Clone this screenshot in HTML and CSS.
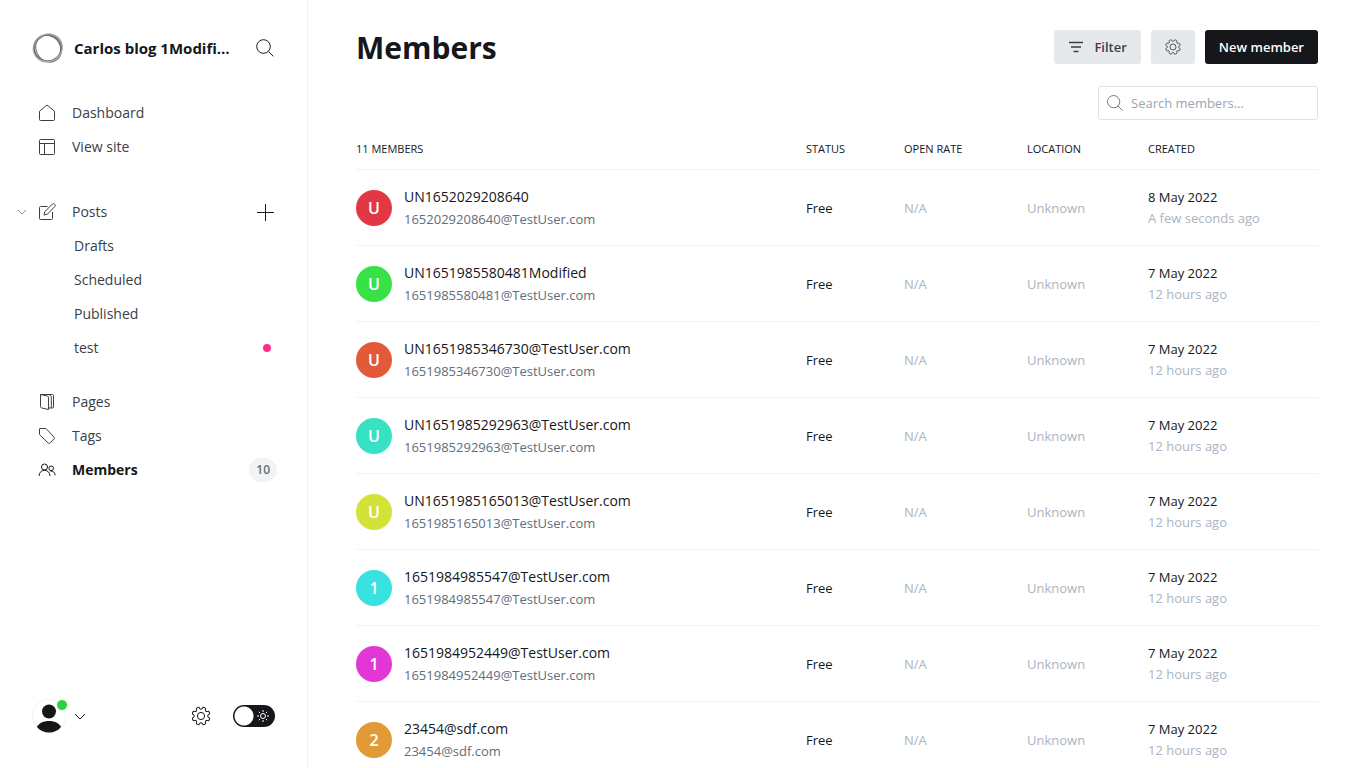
FILE: index.html
```html
<!DOCTYPE html>
<html lang="en">
<head>
<meta charset="utf-8">
<title>Members</title>
<link rel="stylesheet" href="styles.css">
</head>
<body>
<svg class="sprite" aria-hidden="true">
  <symbol id="gear" viewBox="0 0 24 24">
    <path d="M10.343 3.94c.09-.542.56-.94 1.11-.94h1.093c.55 0 1.02.398 1.11.94l.149.894c.07.424.384.764.78.93.398.164.855.142 1.205-.108l.737-.527a1.125 1.125 0 011.45.12l.773.774c.39.389.44 1.002.12 1.45l-.527.737c-.25.35-.272.806-.107 1.204.165.397.505.71.93.78l.893.15c.543.09.94.56.94 1.109v1.094c0 .55-.397 1.02-.94 1.11l-.893.149c-.425.07-.765.383-.93.78-.165.398-.143.854.107 1.204l.527.738c.32.447.269 1.06-.12 1.45l-.774.773a1.125 1.125 0 01-1.449.12l-.738-.527c-.35-.25-.806-.272-1.203-.107-.397.165-.71.505-.781.929l-.149.894c-.09.542-.56.94-1.11.94h-1.094c-.55 0-1.019-.398-1.11-.94l-.148-.894c-.071-.424-.384-.764-.781-.93-.398-.164-.854-.142-1.204.108l-.738.527c-.447.32-1.06.269-1.45-.12l-.773-.774a1.125 1.125 0 01-.12-1.45l.527-.737c.25-.35.273-.806.108-1.204-.165-.397-.505-.71-.93-.78l-.894-.15c-.542-.09-.94-.56-.94-1.109v-1.094c0-.55.398-1.02.94-1.11l.894-.149c.424-.07.765-.383.93-.78.165-.398.143-.854-.107-1.204l-.527-.738a1.125 1.125 0 01.12-1.45l.773-.773a1.125 1.125 0 011.45-.12l.737.527c.35.25.807.272 1.204.107.397-.165.71-.505.78-.929l.15-.894z" transform="rotate(22.5 12 12)"/>
    <circle cx="12" cy="12" r="3.6"/>
  </symbol>
  <symbol id="search" viewBox="0 0 20 20">
    <circle cx="8.5" cy="8.5" r="6.8"/><path d="M13.4 13.4l5 5"/>
  </symbol>
</svg>
<div class="app">
  <nav class="sidebar" aria-label="Main">
    <header class="site">
      <svg class="site-logo" viewBox="0 0 32 32" aria-hidden="true">
        <ellipse cx="16" cy="16" rx="14" ry="13.2" stroke="#8a8a8a" stroke-width="2" transform="rotate(-40 16 16)"/>
        <ellipse cx="15.4" cy="16.6" rx="13.8" ry="12.6" stroke="#5c5c5c" transform="rotate(30 16 16)"/>
        <ellipse cx="16.6" cy="15.6" rx="14.2" ry="12.4" stroke="#777" transform="rotate(60 16 16)"/>
        <ellipse cx="15.8" cy="15.8" rx="14.8" ry="13.6" stroke="#b5b5b5" transform="rotate(-20 16 16)"/>
      </svg>
      <span class="site-name">Carlos blog 1Modified</span>
      <button class="icon-button" type="button" aria-label="Search"><svg class="icon icon-lg" aria-hidden="true"><use href="#search"/></svg></button>
    </header>

    <ul class="nav-group">
      <li><a class="nav-link" href="#dashboard"><svg class="icon" viewBox="0 0 18 18" aria-hidden="true"><path d="M1.500 7.200L9 1l7.500 6.200V15.500a1 1 0 0 1-1 1h-13a1 1 0 0 1-1-1z"/></svg>Dashboard</a></li>
      <li><a class="nav-link" href="#site"><svg class="icon" viewBox="0 0 18 18" aria-hidden="true"><rect x="1.500" y="1.500" width="15" height="15" rx="1"/><path d="M1.500 5.500h15M6.500 5.500v11"/></svg>View site</a></li>
    </ul>

    <ul class="nav-group posts">
      <li class="nav-row">
        <button class="expander" type="button" aria-label="Collapse posts"><svg viewBox="0 0 10 6" aria-hidden="true"><path d="M1 1l4 4 4-4"/></svg></button>
        <a class="nav-link" href="#posts"><svg class="icon" viewBox="0 0 18 18" aria-hidden="true"><path d="M9.500 3.500h-7a1 1 0 0 0-1 1v11a1 1 0 0 0 1 1h11a1 1 0 0 0 1-1V9"/><path d="M6 12l.8-3.400L14.200 1.300a1.600 1.600 0 0 1 2.500 2.400L9.400 11.200z"/></svg>Posts</a>
        <button class="icon-button" type="button" aria-label="New post"><svg class="icon icon-lg" viewBox="0 0 20 20" aria-hidden="true"><path d="M10.500 2v17M2 10.500h17"/></svg></button>
      </li>
      <li><a class="nav-link sub" href="#drafts">Drafts</a></li>
      <li><a class="nav-link sub" href="#scheduled">Scheduled</a></li>
      <li><a class="nav-link sub" href="#published">Published</a></li>
      <li><a class="nav-link sub" href="#test">test<span class="dot"></span></a></li>
    </ul>

    <ul class="nav-group">
      <li><a class="nav-link" href="#pages"><svg class="icon" viewBox="0 0 18 18" aria-hidden="true"><path d="M2.500 1.500l7 1.600a1.300 1.300 0 0 1 1 1.200v12.200l-7-1.600a1.300 1.300 0 0 1-1-1.200z"/><path d="M2.500 1.500h12a1 1 0 0 1 1 1v11.500a1 1 0 0 1-1 1h-4"/><path d="M10.500 1.500l2 .9a1.500 1.500 0 0 1 .8 1.300V15"/></svg>Pages</a></li>
      <li><a class="nav-link" href="#tags"><svg class="icon" viewBox="0 0 18 18" aria-hidden="true"><path d="M1.500 2v5.500l8.800 8.700a1 1 0 0 0 1.400 0l4.500-4.500a1 1 0 0 0 0-1.400L8 1.500H2a.5.5 0 0 0-.5.500z"/></svg>Tags</a></li>
      <li><a class="nav-link active" href="#members" aria-current="page"><svg class="icon" viewBox="0 0 18 18" aria-hidden="true"><circle cx="6.500" cy="6" r="3"/><path d="M1 15c.3-3.800 2.500-5.700 5.500-5.700S11.700 11.200 12 15"/><circle cx="13.200" cy="7.300" r="2.300"/><path d="M12.500 10.200c2.800-.5 4.400 1.400 4.600 4.100"/></svg>Members<span class="count">10</span></a></li>
    </ul>

    <footer class="account">
      <button class="user" type="button" aria-label="Account menu">
        <span class="user-pic">
          <svg viewBox="0 0 34 34" aria-hidden="true"><circle cx="17" cy="17" r="16.500" fill="#fff" stroke="#f1f3f4"/><circle cx="17" cy="12.500" r="7" fill="#15171a"/><path d="M5 28c2-4 6.500-6 12-6s10 2 12 6c-3 3.600-7 5.500-12 5.500S8 31.600 5 28z" fill="#15171a"/></svg>
          <span class="presence"></span>
        </span>
        <svg class="chevron" viewBox="0 0 12 7" aria-hidden="true"><path d="M1 1l5 5 5-5"/></svg>
      </button>
      <a class="settings" href="#settings" aria-label="Settings"><svg class="icon gear-lg" aria-hidden="true"><use href="#gear"/></svg></a>
      <label class="switch">
        <input type="checkbox" aria-label="Night shift">
        <svg viewBox="0 0 14 14" aria-hidden="true"><circle cx="7" cy="7" r="2.500"/><path d="M7 1v2M7 11v2M1 7h2M11 7h2M2.800 2.800l1.300 1.300M9.900 9.900l1.300 1.300M2.800 11.200l1.300-1.300M9.900 4.100l1.300-1.300"/></svg>
      </label>
    </footer>
  </nav>

  <main class="content">
    <header class="toolbar">
      <h1>Members</h1>
      <button class="btn" type="button"><svg class="filter-icon" viewBox="0 0 16 12" aria-hidden="true"><path d="M1 1.500h14M3 6h10M5.500 10.500h5"/></svg>Filter</button>
      <button class="btn btn-icon" type="button" aria-label="Member actions"><svg class="icon gear-sm" aria-hidden="true"><use href="#gear"/></svg></button>
      <a class="btn btn-primary" href="#new">New member</a>
    </header>
    <label class="search">
      <svg class="icon" aria-hidden="true"><use href="#search"/></svg>
      <input type="text" placeholder="Search members..." aria-label="Search members">
    </label>
    <table class="members">
      <thead>
        <tr><th>11 members</th><th class="col-status">Status</th><th class="col-rate">Open rate</th><th class="col-location">Location</th><th class="col-created">Created</th></tr>
      </thead>
      <tbody>
        <tr><td><div class="person"><span class="avatar red">U</span><div><h2>UN1652029208640</h2><p>1652029208640@TestUser.com</p></div></div></td><td>Free</td><td class="muted">N/A</td><td class="muted">Unknown</td><td>8 May 2022<div class="muted">A few seconds ago</div></td></tr>
        <tr><td><div class="person"><span class="avatar green">U</span><div><h2>UN1651985580481Modified</h2><p>1651985580481@TestUser.com</p></div></div></td><td>Free</td><td class="muted">N/A</td><td class="muted">Unknown</td><td>7 May 2022<div class="muted">12 hours ago</div></td></tr>
        <tr><td><div class="person"><span class="avatar orange">U</span><div><h2>UN1651985346730@TestUser.com</h2><p>1651985346730@TestUser.com</p></div></div></td><td>Free</td><td class="muted">N/A</td><td class="muted">Unknown</td><td>7 May 2022<div class="muted">12 hours ago</div></td></tr>
        <tr><td><div class="person"><span class="avatar teal">U</span><div><h2>UN1651985292963@TestUser.com</h2><p>1651985292963@TestUser.com</p></div></div></td><td>Free</td><td class="muted">N/A</td><td class="muted">Unknown</td><td>7 May 2022<div class="muted">12 hours ago</div></td></tr>
        <tr><td><div class="person"><span class="avatar lime">U</span><div><h2>UN1651985165013@TestUser.com</h2><p>1651985165013@TestUser.com</p></div></div></td><td>Free</td><td class="muted">N/A</td><td class="muted">Unknown</td><td>7 May 2022<div class="muted">12 hours ago</div></td></tr>
        <tr><td><div class="person"><span class="avatar cyan">1</span><div><h2>1651984985547@TestUser.com</h2><p>1651984985547@TestUser.com</p></div></div></td><td>Free</td><td class="muted">N/A</td><td class="muted">Unknown</td><td>7 May 2022<div class="muted">12 hours ago</div></td></tr>
        <tr><td><div class="person"><span class="avatar magenta">1</span><div><h2>1651984952449@TestUser.com</h2><p>1651984952449@TestUser.com</p></div></div></td><td>Free</td><td class="muted">N/A</td><td class="muted">Unknown</td><td>7 May 2022<div class="muted">12 hours ago</div></td></tr>
        <tr><td><div class="person"><span class="avatar amber">2</span><div><h2>23454@sdf.com</h2><p>23454@sdf.com</p></div></div></td><td>Free</td><td class="muted">N/A</td><td class="muted">Unknown</td><td>7 May 2022<div class="muted">12 hours ago</div></td></tr>
      </tbody>
    </table>
  </main>
</div>
</body>
</html>
```
FILE: styles.css
```css
* { box-sizing: border-box; }

body {
  margin: 0;
  background: #fff;
  color: #15171a;
  font: 13px/20px "Open Sans", "Noto Sans", sans-serif;
}

h1, h2, p, ul { margin: 0; padding: 0; }
ul { list-style: none; }
a { color: inherit; text-decoration: none; }
button { border: 0; padding: 0; background: none; color: inherit; font: inherit; cursor: pointer; }
svg { fill: none; stroke: currentColor; flex: none; }

.sprite { display: none; }

.app {
  display: grid;
  grid-template-columns: 308px minmax(0, 1fr);
  height: 100vh;
  overflow: hidden;
}

.icon { width: 18px; height: 18px; }
.icon-lg { width: 20px; height: 20px; }

/* Sidebar */
.sidebar {
  display: flex;
  flex-direction: column;
  gap: 20px;
  padding: 32px 30px 35px 32px;
  border-right: 1px solid #f1f3f4;
}

.site { display: flex; align-items: center; gap: 10px; height: 32px; margin-bottom: 12px; }
.site-logo { width: 32px; height: 32px; stroke-width: 1; }
.site-name {
  flex: 1;
  min-width: 0;
  margin-right: 10px;
  overflow: hidden;
  text-overflow: ellipsis;
  white-space: nowrap;
  font-size: 15px;
  font-weight: 700;
}
.icon-button { display: flex; padding: 2px; }
.posts { margin-top: 11px; }
.nav-row { position: relative; display: flex; align-items: center; }

.nav-link {
  display: flex;
  flex: 1;
  align-items: center;
  gap: 16px;
  height: 34px;
  padding-left: 6px;
  color: #394047;
  font-size: 14px;
}
.nav-link.sub { padding: 0 6px 0 42px; }
.nav-link.active { color: #15171a; font-weight: 700; }

.expander { position: absolute; left: -15px; display: flex; color: #7c8b9a; }
.expander svg { width: 10px; height: 6px; }

.dot { width: 8px; height: 8px; margin-left: auto; border-radius: 50%; background: #fb2d8d; }
.count {
  margin-left: auto;
  padding: 2px 7px;
  border-radius: 12px;
  background: #f1f3f4;
  color: #626d79;
  font-size: 12px;
  font-weight: 600;
}

.account { display: flex; align-items: center; margin-top: auto; padding-right: 2px; }
.user { display: flex; align-items: center; gap: 8px; margin-right: auto; }
.user-pic { position: relative; display: flex; }
.user-pic svg { width: 34px; height: 34px; stroke: none; }
.presence { position: absolute; top: 0; right: -2px; width: 12px; height: 12px; border: 1px solid #fff; border-radius: 50%; background: #30cf43; }
.chevron { width: 12px; height: 7px; }
.settings { display: flex; margin-right: 20px; }
.gear-lg { width: 24px; height: 24px; }

.switch { position: relative; display: flex; }
.switch input {
  appearance: none;
  width: 42px;
  height: 22px;
  margin: 0;
  border-radius: 11px;
  background: radial-gradient(circle at 11px 11px, #fff 9px, #15171a 10px);
}
.switch svg { position: absolute; top: 4px; right: 5px; width: 14px; height: 14px; color: #fff; }

/* Main column */
.content { padding: 30px 48px 0; overflow: hidden; }

.toolbar { display: flex; align-items: center; gap: 10px; height: 34px; }
h1 { flex: 1; padding-top: 2px; font-size: 30px; line-height: 36px; font-weight: 700; }

.btn {
  display: flex;
  align-items: center;
  justify-content: center;
  gap: 10px;
  height: 34px;
  padding: 0 14px;
  border-radius: 3px;
  background: #e6e9eb;
  color: #394047;
  font-size: 13px;
  font-weight: 600;
}
.btn-icon { width: 44px; padding: 0; }
.btn-primary { background: #15171a; color: #fff; }
.filter-icon { width: 16px; height: 12px; stroke-width: 1.5; }
.gear-sm { width: 20px; height: 20px; }

.search {
  display: flex;
  align-items: center;
  gap: 7px;
  width: 220px;
  height: 34px;
  margin: 22px 0 0 auto;
  padding: 0 7px;
  border: 1px solid #e1e4e7;
  border-radius: 3px;
  color: #626d79;
}
.search input { flex: 1; min-width: 0; border: 0; padding: 0; outline: 0; background: none; font: inherit; color: #15171a; }
.search input::placeholder { color: #9ba6b1; opacity: 1; }

.members { width: 100%; margin-top: 10px; border-collapse: collapse; table-layout: fixed; }
.members th { height: 39px; padding: 0; font-size: 11px; font-weight: 400; text-align: left; text-transform: uppercase; }
.members td { height: 76px; padding: 2px 0 0; font-size: 13px; line-height: 21px; }
.members tr { border-bottom: 1px solid #f1f3f4; }
.col-status { width: 98px; }
.col-rate { width: 123px; }
.col-location { width: 121px; }
.col-created { width: 170px; }
.members .muted { color: #abb4be; }

.person { display: flex; align-items: center; gap: 12px; }
.person h2 { font-size: 14px; line-height: 22px; font-weight: 500; }
.person p { color: #626d79; font-size: 13px; line-height: 22px; }
.avatar {
  display: flex;
  align-items: center;
  justify-content: center;
  width: 36px;
  height: 36px;
  border-radius: 50%;
  color: #fff;
  font-size: 16px;
  font-weight: 600;
}
.red { background: #e23744; }
.green { background: #37e246; }
.orange { background: #e25a37; }
.teal { background: #37e2c4; }
.lime { background: #d3e237; }
.cyan { background: #37e2e0; }
.magenta { background: #e237d6; }
.amber { background: #e29a37; }
```
